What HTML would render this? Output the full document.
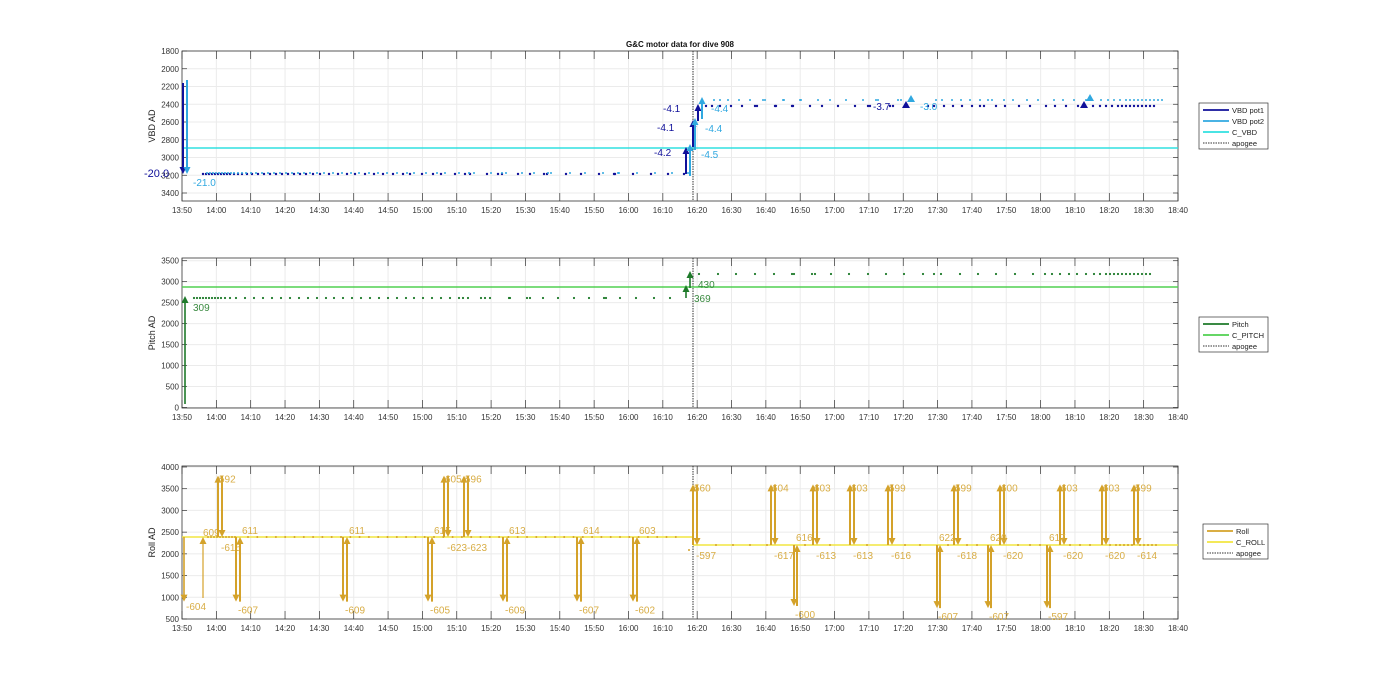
<!DOCTYPE html>
<html><head><meta charset="utf-8"><style>
html,body{margin:0;padding:0;background:#fff;}
svg{display:block;font-family:"Liberation Sans",sans-serif;}
</style></head><body>
<svg id="s" width="1400" height="693" viewBox="0 0 1400 693" xmlns="http://www.w3.org/2000/svg"></svg>
<script>
var s=document.getElementById('s'),h='';
var X0=182,X1=1178,st=(X1-X0)/29;
var ticks=[];for(var i=0;i<=29;i++){var m=50+i*10,hh=13+Math.floor(m/60);ticks.push(hh+':'+('0'+(m%60)).slice(-2));}
function panel(top,bot,yticks,ylab){
 for(var i=1;i<29;i++){var x=X0+i*st;h+='<line x1="'+x+'" y1="'+top+'" x2="'+x+'" y2="'+bot+'" stroke="#ebebeb" stroke-width="1"/>';}
 yticks.forEach(function(t){h+='<line x1="'+X0+'" y1="'+t[1]+'" x2="'+X1+'" y2="'+t[1]+'" stroke="#ebebeb"/>';
  h+='<text x="'+(X0-3)+'" y="'+(t[1]+3)+'" font-size="8" text-anchor="end" fill="#333">'+t[0]+'</text>';
  h+='<line x1="'+X0+'" y1="'+t[1]+'" x2="'+(X0+5)+'" y2="'+t[1]+'" stroke="#333" stroke-width=".7"/><line x1="'+X1+'" y1="'+t[1]+'" x2="'+(X1-5)+'" y2="'+t[1]+'" stroke="#333" stroke-width=".7"/>';});
 for(var i=0;i<=29;i++){var x=X0+i*st;h+='<text x="'+x+'" y="'+(bot+12)+'" font-size="8" text-anchor="middle" fill="#333">'+ticks[i]+'</text>';
  h+='<line x1="'+x+'" y1="'+bot+'" x2="'+x+'" y2="'+(bot-8)+'" stroke="#333" stroke-width=".7"/><line x1="'+x+'" y1="'+top+'" x2="'+x+'" y2="'+(top+8)+'" stroke="#333" stroke-width=".7"/>';}
 h+='<rect x="'+X0+'" y="'+top+'" width="'+(X1-X0)+'" height="'+(bot-top)+'" fill="none" stroke="#333" stroke-width=".8"/>';
 h+='<text transform="translate(155,'+((top+bot)/2)+') rotate(-90)" font-size="9" text-anchor="middle" fill="#222">'+ylab+'</text>';
 h+='<line x1="693" y1="'+top+'" x2="693" y2="'+bot+'" stroke="#333" stroke-dasharray="1.5,1" stroke-width="1"/>';
}
function hl(y,c,x1,x2){h+='<line x1="'+(x1||X0)+'" y1="'+y+'" x2="'+(x2||X1)+'" y2="'+y+'" stroke="'+c+'" stroke-width="1.5"/>';}
function dots(xs,y,c,r){xs.forEach(function(x){h+='<circle cx="'+x+'" cy="'+y+'" r="'+(r||1.2)+'" fill="'+c+'"/>';});}
function arrow(x,y1,y2,c,w){
 var d=y2<y1?1:-1;h+='<line x1="'+x+'" y1="'+y1+'" x2="'+x+'" y2="'+(y2+d*5)+'" stroke="'+c+'" stroke-width="'+(w||1.6)+'"/>';
 h+='<polygon points="'+(x-3.5)+','+(y2+d*7)+' '+(x+3.5)+','+(y2+d*7)+' '+x+','+y2+'" fill="'+c+'"/>';}
function tx(x,y,t,c,fs){h+='<text x="'+x+'" y="'+y+'" font-size="'+(fs||10)+'" fill="'+c+'">'+t+'</text>';}
function legend(x,y,w,items){h+='<rect x="'+x+'" y="'+y+'" width="'+w+'" height="'+(items.length*11+2)+'" fill="#fff" stroke="#333" stroke-width=".7"/>';
 items.forEach(function(it,i){var yy=y+7+i*11;h+='<line x1="'+(x+4)+'" y1="'+yy+'" x2="'+(x+30)+'" y2="'+yy+'" stroke="'+it[1]+'" stroke-width="'+(it[2]?1:1.8)+'" '+(it[2]?'stroke-dasharray="1.5,1"':'')+'/>';
 h+='<text x="'+(x+33)+'" y="'+(yy+3)+'" font-size="7.5" fill="#222">'+it[0]+'</text>';});}

h+='<text x="680" y="47" font-size="8" font-weight="bold" text-anchor="middle" fill="#111">G&amp;C motor data for dive 908</text>';
var yt=[];for(var v=1800;v<=3400;v+=200)yt.push([v,51+(v-1800)*0.08875]);
panel(51,201,yt,'VBD AD');
var NV='#10109a',LB='#30a8e0',CY='#30e0e0';
hl(148,CY);
var d1=[203,206,209,212,215,218,221,224,227,230,234,238,242,247,252,258,264,270,276,282,288,294,300,306,313,320,329,338,347,355,365,374,383,393,403,410,422,433,441,455,465,470,487,498,502,518,530,544,547,566,581,599,614,615,633,651,668,684];
dots(d1,174,NV);dots(d1.map(function(x){return x+4}),173,LB,1);
var d2=[706,712,720,731,742,755,757,775,776,792,793,810,822,838,855,868,870,890,893,928,934,944,953,962,972,980,984,996,1005,1019,1030,1046,1055,1066,1078,1093,1100,1106,1112,1118,1122,1126,1130,1134,1138,1142,1146,1150,1154];
dots(d2,106,NV);dots(d2.map(function(x){return x+8}),100,LB,1);
arrow(183,83,174,NV,2);arrow(187,80,174,LB,2);
tx(144,177,'-20.0',NV,11);tx(193,186,'-21.0',LB,10);
arrow(686,174,147,NV,2);arrow(690,176,144,LB,2);arrow(693,147,120,NV,2);arrow(695,150,118,LB,2);arrow(698,121,104,NV,2);arrow(702,119,97,LB,2);
tx(654,156,'-4.2',NV);tx(701,158,'-4.5',LB);tx(657,131,'-4.1',NV);tx(705,132,'-4.4',LB);tx(663,112,'-4.1',NV);tx(711,112,'-4.4',LB);
tx(873,110,'-3.7',NV);tx(920,110,'-3.0',LB);
h+='<polygon points="902,108 910,108 906,101" fill="'+NV+'"/><polygon points="907,102 915,102 911,95" fill="'+LB+'"/>';
h+='<polygon points="1080,108 1088,108 1084,101" fill="'+NV+'"/><polygon points="1086,101 1094,101 1090,94" fill="'+LB+'"/>';
legend(1199,103,69,[['VBD pot1',NV],['VBD pot2',LB],['C_VBD',CY],['apogee','#333',1]]);
var yt2=[];for(var v=0;v<=3500;v+=500)yt2.push([v,407.5-v*0.04194]);
panel(258,408,yt2,'Pitch AD');
var DG='#1e7a2a',GR='#50d050';
hl(287,GR);
var p1=[194,197,200,203,206,209,212,215,218,221,225,230,236,245,254,263,272,281,290,299,308,317,326,334,343,352,361,370,379,388,397,406,414,423,432,441,450,459,463,468,481,485,490,509,510,527,530,543,558,574,589,604,606,620,636,654,670];
dots(p1,298,DG,1.1);
var p2=[699,718,736,755,774,792,794,812,815,831,849,868,886,904,923,934,941,960,978,996,1015,1033,1045,1052,1060,1069,1077,1086,1094,1100,1106,1110,1114,1118,1122,1126,1130,1134,1138,1142,1146,1150];
dots(p2,274,DG,1.1);
arrow(185,404,296,DG,1.6);arrow(686,298,285,DG,1.6);arrow(690,288,271,DG,1.6);
tx(193,311,'309','#3a8a40');tx(694,302,'369','#3a8a40');tx(698,288,'430','#3a8a40');
legend(1199,317,69,[['Pitch',DG],['C_PITCH',GR],['apogee','#333',1]]);
var yt3=[];for(var v=500;v<=4000;v+=500)yt3.push([v,619-(v-500)*0.04343]);
panel(466,619,yt3,'Roll AD');
var GD='#d4a22a',YL='#f2e640',LT='#d8ad45';
hl(537,YL,X0,693);hl(545,YL,693,X1);
var r1=[];for(var x=208;x<=236;x+=3)r1.push(x);for(var x=248;x<=680;x+=9.3)r1.push(x);dots(r1,537,GD,1);
var r2=[716,733,750,767,805,830,867,905,920,948,967,977,1018,1030,1040,1070,1080,1090,1110,1116,1120,1124,1128,1132,1140,1144,1148,1152,1156];dots(r2,545,GD,1);dots([689],550,GD,1);
function v3(v){return 619-(v-500)*0.04343;}
var T=v3(3800),M=537,B=v3(900),T2=v3(3600),M2=545,B2=v3(800),B3=v3(750);
arrow(184,M,B,GD);tx(186,610,'-604',LT);
arrow(203,598,M,GD,1.2);tx(203,536,'609',LT);
function pair(x,top,mid,tl,bl){arrow(x,mid,top,GD,2);arrow(x+4,top,mid,GD,2);tx(x+1,top+7,tl,LT);tx(x+3,mid+14,bl,LT);}
function pairD(x,mid,bot,tl,bl){arrow(x,mid,bot,GD,2);arrow(x+4,bot,mid,GD,2);tx(x+6,mid-3,tl,LT);tx(x+2,bot+12,bl,LT);}
pair(218,T,M,'592','-615');
pairD(236,M,B,'611','-607');pairD(343,M,B,'611','-609');pairD(428,M,B,'615','-605');
pair(444,T,M,'605','-623');pair(464,T,M,'596','-623');
pairD(503,M,B,'613','-609');pairD(577,M,B,'614','-607');pairD(633,M,B,'603','-602');
pair(693,T2,M2,'560','-597');
[[771,'604','-617'],[813,'603','-613'],[850,'603','-613'],[888,'599','-616'],[954,'599','-618'],[1000,'600','-620'],[1060,'603','-620'],[1102,'603','-620'],[1134,'599','-614']].forEach(function(a){pair(a[0],T2,M2,a[1],a[2]);});
[[794,B2,'616','-600'],[937,B3,'622','-607'],[988,B3,'620','-607'],[1047,B3,'617','-597']].forEach(function(a){
 arrow(a[0],M2,a[1],GD,2);arrow(a[0]+3,a[1],M2,GD,2);tx(a[0]+2,M2-4,a[2],LT);tx(a[0]+1,a[1]+12,a[3],LT);});
legend(1203,524,65,[['Roll',GD],['C_ROLL',YL],['apogee','#333',1]]);
s.innerHTML=h;
</script>
</body></html>
